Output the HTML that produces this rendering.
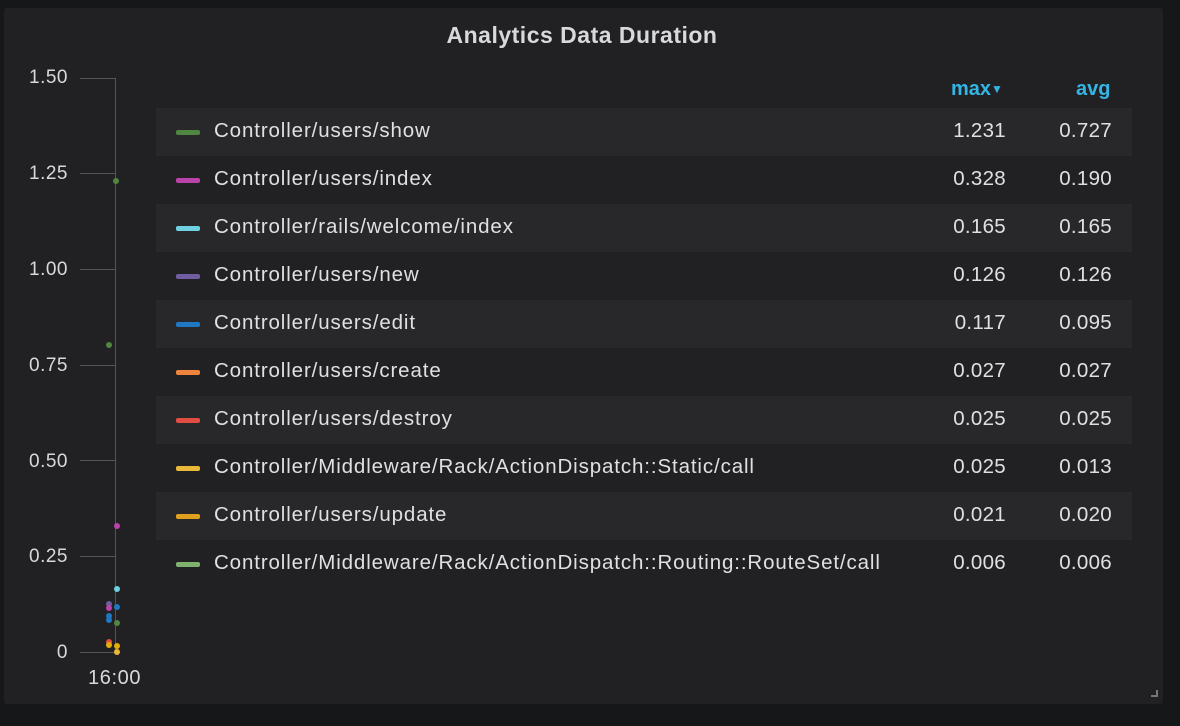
<!DOCTYPE html>
<html><head><style>
body{margin:0;width:1180px;height:726px;background:#161719;font-family:"Liberation Sans",sans-serif;overflow:hidden;position:relative}
.panel{position:absolute;left:4px;top:8px;width:1159px;height:696px;background:#212124;border-radius:3px}
.title{position:absolute;top:22px;left:0;width:1164px;text-align:center;color:#d8d9da;font-size:23px;font-weight:bold;letter-spacing:0.5px}
.yl{position:absolute;right:1112px;color:#d8d9da;font-size:19px;text-align:right;letter-spacing:0.5px}
.tick{position:absolute;left:80px;width:35px;height:1px;background:#555}
.row{position:absolute;left:156px;width:976px;height:48px;color:#e0e0e0;font-size:20.5px;line-height:46px}
.row.s{background:#28282b}
.sw{position:absolute;left:20px;top:22px;width:24px;height:5px;border-radius:2px}
.nm{position:absolute;left:58px;letter-spacing:0.88px}
.mx{position:absolute;right:126px;letter-spacing:0.3px}
.av{position:absolute;right:20px;letter-spacing:0.3px}
.h{position:absolute;top:78px;color:#33b5e5;font-size:20px;font-weight:bold}
.d{position:absolute;width:6px;height:6px;border-radius:3px}
</style></head><body>
<div class="panel"></div>
<div class="title">Analytics Data Duration</div>
<div class="yl" style="top:67px">1.50</div>
<div class="yl" style="top:163px">1.25</div>
<div class="yl" style="top:259px">1.00</div>
<div class="yl" style="top:355px">0.75</div>
<div class="yl" style="top:451px">0.50</div>
<div class="yl" style="top:546px">0.25</div>
<div class="yl" style="top:642px">0</div>
<div class="tick" style="top:78px"></div><div class="tick" style="top:173px"></div><div class="tick" style="top:269px"></div><div class="tick" style="top:365px"></div><div class="tick" style="top:460px"></div><div class="tick" style="top:556px"></div><div class="tick" style="top:652px"></div>
<div style="position:absolute;left:115px;top:78px;width:1px;height:575px;background:#555"></div>
<div style="position:absolute;left:88px;top:667px;color:#d8d9da;font-size:20px;letter-spacing:0.6px">16:00</div>
<div class="d" style="left:113px;top:178px;background:#508642"></div>
<div class="d" style="left:106px;top:342px;background:#508642"></div>
<div class="d" style="left:114px;top:523px;background:#ba43a9"></div>
<div class="d" style="left:114px;top:586px;background:#6ed0e0"></div>
<div class="d" style="left:106px;top:601px;background:#705da0"></div>
<div class="d" style="left:106px;top:605px;background:#ba43a9"></div>
<div class="d" style="left:114px;top:604px;background:#1f78c1"></div>
<div class="d" style="left:106px;top:613px;background:#1f78c1"></div>
<div class="d" style="left:106px;top:617px;background:#1f78c1"></div>
<div class="d" style="left:114px;top:620px;background:#508642"></div>
<div class="d" style="left:106px;top:639px;background:#e24d42"></div>
<div class="d" style="left:106px;top:642px;background:#e5ac0e"></div>
<div class="d" style="left:114px;top:643px;background:#e5ac0e"></div>
<div class="d" style="left:114px;top:649px;background:#eab839"></div>
<div class="h" style="left:951px">max<span style="font-size:12px;vertical-align:2px">▼</span></div>
<div class="h" style="left:1076px">avg</div>
<div class="row s" style="top:108px"><div class="sw" style="background:#508642"></div><span class="nm">Controller/users/show</span><span class="mx">1.231</span><span class="av">0.727</span></div>
<div class="row" style="top:156px"><div class="sw" style="background:#ba43a9"></div><span class="nm">Controller/users/index</span><span class="mx">0.328</span><span class="av">0.190</span></div>
<div class="row s" style="top:204px"><div class="sw" style="background:#6ed0e0"></div><span class="nm">Controller/rails/welcome/index</span><span class="mx">0.165</span><span class="av">0.165</span></div>
<div class="row" style="top:252px"><div class="sw" style="background:#705da0"></div><span class="nm">Controller/users/new</span><span class="mx">0.126</span><span class="av">0.126</span></div>
<div class="row s" style="top:300px"><div class="sw" style="background:#1f78c1"></div><span class="nm">Controller/users/edit</span><span class="mx">0.117</span><span class="av">0.095</span></div>
<div class="row" style="top:348px"><div class="sw" style="background:#ef843c"></div><span class="nm">Controller/users/create</span><span class="mx">0.027</span><span class="av">0.027</span></div>
<div class="row s" style="top:396px"><div class="sw" style="background:#e24d42"></div><span class="nm">Controller/users/destroy</span><span class="mx">0.025</span><span class="av">0.025</span></div>
<div class="row" style="top:444px"><div class="sw" style="background:#eab839"></div><span class="nm">Controller/Middleware/Rack/ActionDispatch::Static/call</span><span class="mx">0.025</span><span class="av">0.013</span></div>
<div class="row s" style="top:492px"><div class="sw" style="background:#e0a01e"></div><span class="nm">Controller/users/update</span><span class="mx">0.021</span><span class="av">0.020</span></div>
<div class="row" style="top:540px"><div class="sw" style="background:#7eb26d"></div><span class="nm">Controller/Middleware/Rack/ActionDispatch::Routing::RouteSet/call</span><span class="mx">0.006</span><span class="av">0.006</span></div>
<div style="position:absolute;left:1151px;top:690px;width:7px;height:7px;border-right:2px solid #777;border-bottom:2px solid #777;box-sizing:border-box"></div>
</body></html>
